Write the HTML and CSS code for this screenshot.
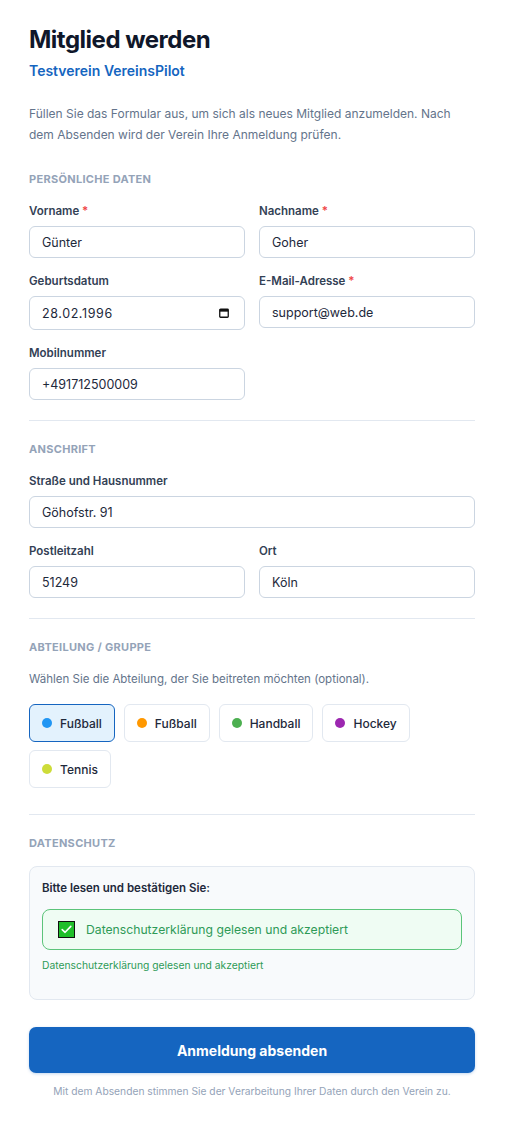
FILE: index.html
```html
<!DOCTYPE html>
<html lang="de">
<head>
<meta charset="utf-8">
<title>Mitglied werden</title>
<link rel="stylesheet" href="styles.css">
</head>
<body>
<main class="page">
  <header class="head">
    <h1 class="title">Mitglied werden</h1>
    <div class="club">Testverein VereinsPilot</div>
    <p class="intro">Füllen Sie das Formular aus, um sich als neues Mitglied anzumelden. Nach dem Absenden wird der Verein Ihre Anmeldung prüfen.</p>
  </header>

  <section class="section">
    <h2 class="section-title">Persönliche Daten</h2>
    <div class="grid">
      <div class="field">
        <label class="label">Vorname <span class="req">*</span></label>
        <input class="input" type="text" value="Günter">
      </div>
      <div class="field">
        <label class="label">Nachname <span class="req">*</span></label>
        <input class="input" type="text" value="Goher">
      </div>
      <div class="field">
        <label class="label">Geburtsdatum</label>
        <div class="date-wrap">
          <input class="input input-date" type="text" value="28.02.1996">
          <svg class="cal" width="10" height="10" viewBox="0 0 10 10" aria-hidden="true">
            <rect x="0.75" y="1.25" width="8.5" height="8" rx="0.8" fill="none" stroke="#111" stroke-width="1.3"/>
            <rect x="0.75" y="1.25" width="8.5" height="2.4" fill="#111"/>
          </svg>
        </div>
      </div>
      <div class="field">
        <label class="label">E-Mail-Adresse <span class="req">*</span></label>
        <input class="input" type="text" value="support@web.de">
      </div>
      <div class="field">
        <label class="label">Mobilnummer</label>
        <input class="input" type="text" value="+491712500009">
      </div>
    </div>
  </section>

  <section class="section">
    <h2 class="section-title">Anschrift</h2>
    <div class="grid">
      <div class="field full">
        <label class="label">Straße und Hausnummer</label>
        <input class="input" type="text" value="Göhofstr. 91">
      </div>
      <div class="field">
        <label class="label">Postleitzahl</label>
        <input class="input" type="text" value="51249">
      </div>
      <div class="field">
        <label class="label">Ort</label>
        <input class="input" type="text" value="Köln">
      </div>
    </div>
  </section>

  <section class="section">
    <h2 class="section-title">Abteilung / Gruppe</h2>
    <p class="hint">Wählen Sie die Abteilung, der Sie beitreten möchten (optional).</p>
    <div class="chips">
      <button class="chip selected" type="button"><span class="dot dot-blue"></span>Fußball</button>
      <button class="chip" type="button"><span class="dot dot-orange"></span>Fußball</button>
      <button class="chip" type="button"><span class="dot dot-green"></span>Handball</button>
      <button class="chip" type="button"><span class="dot dot-purple"></span>Hockey</button>
      <button class="chip" type="button"><span class="dot dot-lime"></span>Tennis</button>
    </div>
  </section>

  <section class="section last">
    <h2 class="section-title">Datenschutz</h2>
    <div class="privacy">
      <div class="privacy-title">Bitte lesen und bestätigen Sie:</div>
      <div class="consent">
        <span class="check">
          <svg width="11" height="9" viewBox="0 0 11 9" aria-hidden="true"><path d="M1.2 4.6 L4.1 7.3 L9.8 1.4" fill="none" stroke="#fff" stroke-width="1.6" stroke-linecap="round" stroke-linejoin="round"/></svg>
        </span>
        <span class="consent-text">Datenschutzerklärung gelesen und akzeptiert</span>
      </div>
      <div class="consent-note">Datenschutzerklärung gelesen und akzeptiert</div>
    </div>
  </section>

  <button class="submit" type="button">Anmeldung absenden</button>
  <p class="footnote">Mit dem Absenden stimmen Sie der Verarbeitung Ihrer Daten durch den Verein zu.</p>
</main>
</body>
</html>
```
FILE: styles.css
```css
* { box-sizing: border-box; }
html, body { margin: 0; padding: 0; background: #fff; }
body {
  font-family: Inter, "Noto Sans", "Liberation Sans", sans-serif;
  color: #1e293b;
}
.page {
  padding: 25px 30px 40px 29px;
}
.title {
  margin: 0;
  font-size: 24px;
  line-height: 29px;
  font-weight: 700;
  color: #0f172a;
  letter-spacing: -0.5px;
}
.club {
  margin-top: 7px;
  font-size: 14px;
  line-height: 20px;
  font-weight: 600;
  color: #1565c0;
}
.intro {
  margin: 22px 0 0;
  font-size: 12px;
  line-height: 21px;
  color: #64748b;
}
.section {
  padding: 21px 0 20px;
  border-bottom: 1px solid #e2e8f0;
}
.head + .section { padding-top: 27px; }
.section.last { border-bottom: none; padding-bottom: 0; }
.section-title {
  margin: 0 0 17px;
  font-size: 11px;
  line-height: 14px;
  font-weight: 700;
  text-transform: uppercase;
  letter-spacing: 0.3px;
  color: #94a3b8;
}
.grid {
  display: grid;
  grid-template-columns: 1fr 1fr;
  column-gap: 14px;
  row-gap: 15px;
  align-items: start;
}
.full { grid-column: 1 / -1; }
.field { display: flex; flex-direction: column; }
.label {
  font-size: 11.5px;
  line-height: 16px;
  font-weight: 600;
  color: #334155;
  margin-bottom: 7px;
}
.req { color: #ef4444; }
.input {
  display: block;
  width: 100%;
  height: 32px;
  padding: 0 12px;
  border: 1px solid #cbd5e1;
  border-radius: 6px;
  background: #fff;
  font-family: inherit;
  font-size: 12.5px;
  color: #1e293b;
  outline: none;
}
.date-wrap { position: relative; }
.input-date { height: 34px; letter-spacing: 0.6px; }
.cal { position: absolute; right: 16px; top: 12px; }
.hint {
  margin: 0 0 16px;
  font-size: 11.5px;
  line-height: 17px;
  color: #64748b;
}
.chips {
  display: flex;
  flex-wrap: wrap;
  gap: 8px 9px;
  margin-bottom: 6px;
}
.chip {
  display: inline-flex;
  align-items: center;
  gap: 8px;
  height: 38px;
  padding: 0 12px;
  border: 1px solid #e2e8f0;
  border-radius: 6px;
  background: #fff;
  font-family: inherit;
  font-size: 12px;
  font-weight: 500;
  color: #1e293b;
}
.chip.selected {
  background: #e3f2fd;
  border-color: #1565c0;
}
.dot { width: 10px; height: 10px; border-radius: 50%; flex: none; }
.dot-blue { background: #2196f3; }
.dot-orange { background: #ff9800; }
.dot-green { background: #4caf50; }
.dot-purple { background: #9c27b0; }
.dot-lime { background: #cddc39; }
.privacy {
  margin-top: -1px;
  padding: 13px 12px 27px;
  border: 1px solid #e2e8f0;
  border-radius: 8px;
  background: #f8fafc;
}
.privacy-title {
  font-size: 11.5px;
  line-height: 16px;
  font-weight: 600;
  color: #1e293b;
}
.consent {
  display: flex;
  align-items: center;
  gap: 11px;
  height: 41px;
  margin-top: 13px;
  padding: 0 15px;
  border: 1px solid #5cc47a;
  border-radius: 8px;
  background: #effcf3;
}
.check {
  display: inline-flex;
  align-items: center;
  justify-content: center;
  width: 17px;
  height: 17px;
  background: #1fbf2a;
  border: 1px solid #111;
  flex: none;
}
.consent-text {
  font-size: 12.2px;
  color: #2e9a57;
}
.consent-note {
  margin-top: 8px;
  font-size: 10.3px;
  line-height: 14px;
  color: #2e9a57;
}
.submit {
  display: block;
  width: 100%;
  height: 46px;
  margin-top: 27px;
  border: none;
  border-radius: 7px;
  background: #1565c0;
  color: #fff;
  font-family: inherit;
  font-size: 14px;
  font-weight: 700;
  box-shadow: 0 1px 3px rgba(21, 101, 192, 0.25);
}
.footnote {
  margin: 11px 0 0;
  text-align: center;
  font-size: 10.25px;
  line-height: 14px;
  color: #94a3b8;
}
```
